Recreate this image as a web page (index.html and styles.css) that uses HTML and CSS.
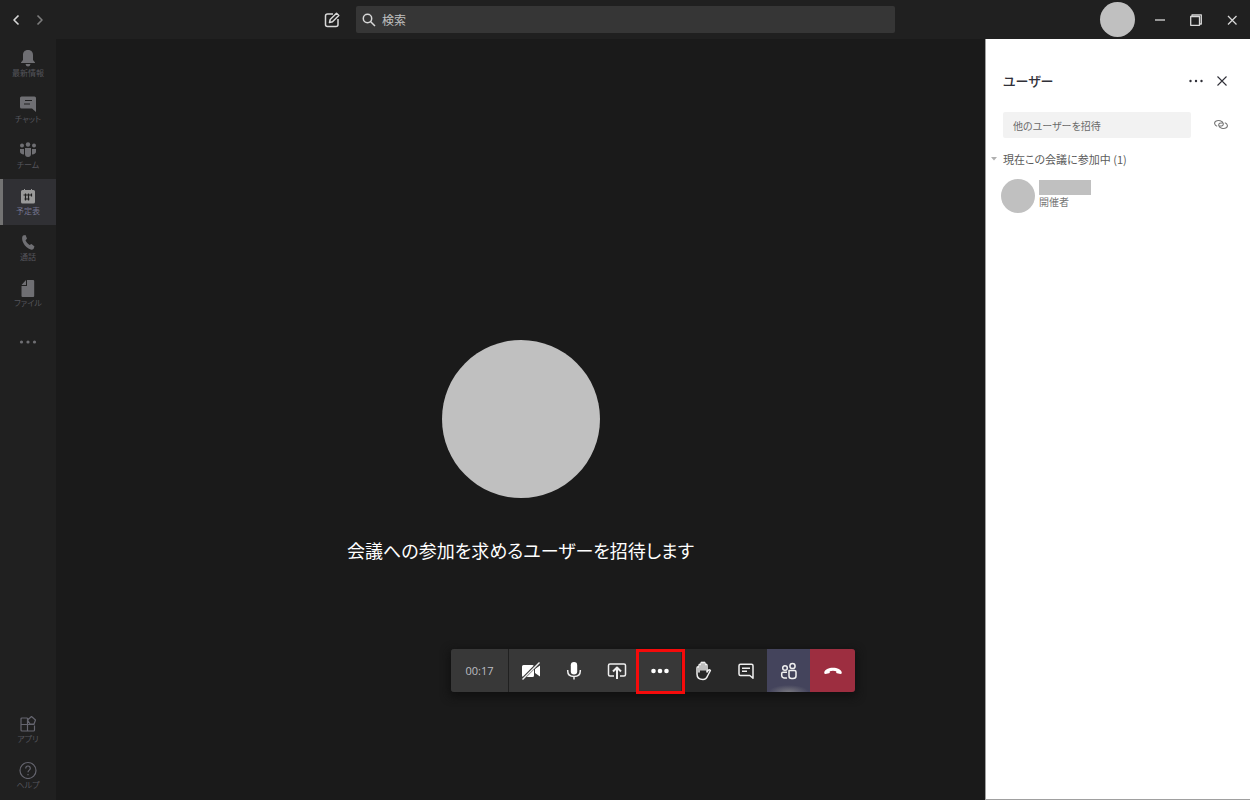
FILE: index.html
```html
<!DOCTYPE html>
<html lang="ja">
<head>
<meta charset="utf-8">
<meta name="viewport" content="width=device-width, initial-scale=1">
<title>会議</title>
<link rel="stylesheet" href="styles.css">
</head>
<body>
<div class="app">
  <header class="titlebar">
    <nav class="history">
      <button class="icon-button history-back" aria-label="戻る"><svg width="8" height="12" viewBox="0 0 8 12"><path d="M6.500 1.500 2 6l4.500 4.500"/></svg></button>
      <button class="icon-button history-next" aria-label="進む"><svg width="8" height="12" viewBox="0 0 8 12"><path d="M1.500 1.500 6 6l-4.500 4.500"/></svg></button>
    </nav>
    <div class="search-area">
      <button class="icon-button compose" aria-label="新しいチャット"><svg width="16" height="16" viewBox="0 0 16 16"><path d="M9 2H3.500Q1.500 2 1.500 4v8.500q0 2 2 2H12q2 0 2-2V7"/><path d="m5.500 10.500.7-3L12.500 1.200l2.300 2.300L8.500 9.800z"/></svg></button>
      <label class="search">
        <svg width="14" height="14" viewBox="0 0 14 14"><circle cx="5.500" cy="5.500" r="4.200"/><path d="m8.500 8.500 4.500 4.500"/></svg>
        <input type="search" placeholder="検索" aria-label="検索">
      </label>
    </div>
    <div class="window-controls">
      <button class="profile" aria-label="プロフィール"></button>
      <button class="icon-button" aria-label="最小化"><svg width="12" height="12" viewBox="0 0 12 12"><path d="M1 6h10"/></svg></button>
      <button class="icon-button" aria-label="元に戻す"><svg width="12" height="12" viewBox="0 0 12 12"><path d="M.7 2.500h8.800v8.800H.7zM2 2.500V.8h9.300V10H9.500"/></svg></button>
      <button class="icon-button" aria-label="閉じる"><svg width="12" height="12" viewBox="0 0 12 12"><path d="m2 2 8.500 8.500m0-8.500L2 10.500"/></svg></button>
    </div>
  </header>

  <div class="workspace">
    <nav class="rail">
      <a class="rail-item" href="#"><svg width="18" height="18" viewBox="0 0 18 18"><path d="M9 1C5.500 1 4 3.300 4 6v5l-2 2.500V14h14v-.5L14 11V6c0-2.700-1.500-5-5-5zM6.500 15h5Q11 17.500 9 17.500T6.500 15z"/></svg><span>最新情報</span></a>
      <a class="rail-item" href="#"><svg width="18" height="18" viewBox="0 0 18 18"><path d="M2.500 1.500h13q1.500 0 1.500 1.500v14l-4-3.500H2.500Q1 13.500 1 12V3q0-1.500 1.500-1.500z"/><path class="cut" d="M6 5.500h7M5 9h6"/></svg><span>チャット</span></a>
      <a class="rail-item" href="#"><svg width="18" height="18" viewBox="0 0 18 18"><circle cx="3" cy="4.500" r="2"/><circle cx="9" cy="3.500" r="2.200"/><circle cx="15" cy="4.500" r="2"/><path d="M6 7h6v6q0 3-3 3t-3-3zM1 8h4v5.500Q1 13 1 10.500zM13 8h4v2.500q0 2.500-4 3z"/></svg><span>チーム</span></a>
      <a class="rail-item active" href="#"><svg width="18" height="18" viewBox="0 0 18 18"><path d="M3.500 3H5V2h1v1h6V2h1v1h1.500Q16 3 16 4.500v10.500q0 1.500-1.500 1.500h-11Q2 16.500 2 15V4.500Q2 3 3.500 3z"/><path class="cut" d="M4.500 8h8M5.500 12h5M6.500 6.500v7M9.500 6.500v7M12.500 6.500v3"/></svg><span>予定表</span></a>
      <a class="rail-item" href="#"><svg width="18" height="18" viewBox="0 0 18 18"><path d="M4 2.500 6.500 2 8 5.500 6.500 7.500q1.500 3 4 4.500l2-1 3 2.500-1 2.500q-2 1.500-5-.5Q5 12.500 3.500 8 2.500 4 4 2.500z"/></svg><span>通話</span></a>
      <a class="rail-item" href="#"><svg width="18" height="18" viewBox="0 0 18 18"><path d="M8 1h6q1.200 0 1.200 1v15q0 1-1 1H3.500q-1 0-1-1V7H8zM2.500 6 7 1v5z"/></svg><span>ファイル</span></a>
      <button class="rail-more" aria-label="その他"><svg width="18" height="6" viewBox="0 0 18 6"><circle cx="2.500" cy="3" r="1.600"/><circle cx="9" cy="3" r="1.600"/><circle cx="15.500" cy="3" r="1.600"/></svg></button>
      <div class="rail-bottom">
        <a class="rail-item outlined" href="#"><svg width="18" height="18" viewBox="0 0 18 18"><path d="M8.500 3H3Q2 3 2 4v11q0 1 1 1h11.500q1 0 1-1v-4.500M2 9.500h13.500M8.500 3v13M12.500 1.500l4 3.500-1.500 4h-4L8.500 5z"/></svg><span>アプリ</span></a>
        <a class="rail-item outlined" href="#"><svg width="18" height="18" viewBox="0 0 18 18"><circle cx="9" cy="9.500" r="8"/><path d="M6.700 7.500Q6.800 5 9 5t2.300 2.500C11.300 9.300 9 9 9 11.300M9 13v1.200"/></svg><span>ヘルプ</span></a>
      </div>
    </nav>

    <main class="stage">
      <div class="stage-avatar"></div>
      <h1>会議への参加を求めるユーザーを招待します</h1>
    </main>

    <aside class="people">
      <div class="people-header">
        <h2>ユーザー</h2>
        <button class="icon-button" aria-label="その他のオプション"><svg class="dots" width="16" height="4" viewBox="0 0 16 4"><circle cx="2.500" cy="2" r="1.200"/><circle cx="8" cy="2" r="1.200"/><circle cx="13.500" cy="2" r="1.200"/></svg></button>
        <button class="icon-button" aria-label="閉じる"><svg width="12" height="12" viewBox="0 0 12 12"><path d="m1.500 1.500 9 9m0-9-9 9"/></svg></button>
      </div>
      <div class="invite">
        <input type="text" placeholder="他のユーザーを招待" aria-label="他のユーザーを招待">
        <button class="icon-button" aria-label="リンクをコピー"><svg width="14" height="12" viewBox="0 0 14 12"><path d="M3.200 7.200C.5 6.500-.3 3.500 1.800 2.200c2.500-1.500 7-.3 7.500 2.300.3 2-1.800 3-3.800 2.300M10.800 3.800c2.700.7 3.500 3.700 1.400 5-2.500 1.500-7 .3-7.500-2.300-.3-2 1.800-3 3.800-2.300"/></svg></button>
      </div>
      <button class="group-toggle"><svg width="6" height="4" viewBox="0 0 6 4"><path d="M0 0h6L3 3.500z"/></svg><span>現在この会議に参加中 (1)</span></button>
      <div class="person">
        <div class="person-avatar"></div>
        <div class="person-text"><div class="person-name"></div><span>開催者</span></div>
      </div>
    </aside>

    <div class="call-bar" role="toolbar" aria-label="通話コントロール">
      <time>00:17</time>
      <button class="solid" aria-label="カメラをオンにする"><svg width="22" height="20" viewBox="0 0 22 20"><path class="fill" d="M3.500 4h9Q14 4 14 5.500v9q0 1.500-1.500 1.500h-9Q2 16 2 14.500v-9Q2 4 3.500 4zM15 8l5-3.500v11L15 12z"/><path class="slash-gap" d="m1 19.500 18-18"/><path d="M2.500 18.500 19.500 1.500"/></svg></button>
      <button class="solid" aria-label="ミュート"><svg width="20" height="20" viewBox="0 0 20 20"><rect class="fill" x="6.800" y="1" width="6.400" height="12.500" rx="3.200"/><path d="M3.700 9v1q0 5.500 6.300 5.500t6.300-5.500V9M10 15.500v3"/></svg></button>
      <button class="solid" aria-label="共有"><svg width="20" height="18" viewBox="0 0 20 18"><path d="M7 14H3q-1.500 0-1.500-1.500v-9Q1.500 2 3 2h14q1.500 0 1.500 1.500v9q0 1.500-1.500 1.500h-4"/><path class="thick" d="M10 17V6M6 9.500l4-4 4 4"/></svg></button>
      <button class="solid highlighted" aria-label="その他の操作"><svg width="20" height="6" viewBox="0 0 20 6"><g class="fill"><circle cx="3.500" cy="3" r="2.300"/><circle cx="10" cy="3" r="2.300"/><circle cx="16.500" cy="3" r="2.300"/></g></svg></button>
      <button aria-label="手を挙げる"><svg width="18" height="20" viewBox="0 0 18 20"><path d="M5 11V4.500q0-1.200 1-1.200t1 1.200V9 2.500q0-1.200 1-1.200t1 1.200V9 2.500q0-1.200 1-1.200t1 1.200V9 4.500q0-1.200 1-1.200t1 1.200v6.500l1.200-1.700q1.200-.9 2.200.2L13.500 15q-1.300 3.500-4.500 3.500c-4 0-6-2.500-6-5.500V7q0-1.200 1-1.200T5 7z"/></svg></button>
      <button aria-label="会話の表示"><svg width="18" height="18" viewBox="0 0 18 18"><path d="M3.500 2.200h11q1.500 0 1.500 1.500v12.500l-3.200-2.700H3.500Q2 13.500 2 12V3.700q0-1.500 1.500-1.500zM5 6.200h8M5 9.300h5"/></svg></button>
      <button class="selected" aria-label="参加者の表示"><svg width="18" height="18" viewBox="0 0 18 18"><circle cx="5" cy="6" r="2.300"/><circle cx="12.500" cy="4" r="2.600"/><path d="M7 10.200H3q-1.300 0-1.300 1.300v2q0 3 5.300 2.500M9 8.500h5.500q1.500 0 1.500 1.500v4q0 2.500-3 2.500h-1.500q-2.500 0-2.500-2.500z"/></svg></button>
      <button class="hang-up" aria-label="退出"><svg width="20" height="10" viewBox="0 0 20 10"><path class="fill" d="M1.200 6.500C2 0 18 0 18.800 6.500q0 1.500-1.300 1.500L14 7.300q-.8-.2-.8-1V5.200q-3.200-1-6.400 0v1.100q0 .8-.8 1L2.500 8Q1.200 8 1.200 6.500z"/></svg></button>
    </div>
  </div>
</div>
</body>
</html>
```
FILE: styles.css
```css
* { box-sizing: border-box; }

body {
  margin: 0;
  background: #1a1a1a;
  color: #fff;
  font-family: "Noto Sans CJK JP", "Open Sans", sans-serif;
  font-feature-settings: "palt";
}

button, input { font: inherit; font-feature-settings: inherit; color: inherit; }
button { padding: 0; border: 0; background: none; cursor: pointer; }
svg { display: block; flex: none; fill: none; stroke: currentColor; stroke-width: 1.3; stroke-linejoin: round; }
h1, h2 { margin: 0; font-weight: 400; }

.app { min-height: 100vh; display: flex; flex-direction: column; }

.titlebar {
  display: grid;
  grid-template-columns: 324fr 571fr 355fr;
  align-items: center;
  height: 39px;
  background: #202020;
  color: #d8d8d8;
}

.icon-button { display: flex; align-items: center; justify-content: center; }
.history { display: flex; gap: 16px; padding-left: 12px; }
.history svg { stroke-width: 1.6; }
.history-next { color: #7c7c7c; }
.search-area { display: flex; align-items: center; gap: 16px; }
.compose svg { stroke-width: 1.5; }

.search {
  flex: 1;
  display: flex;
  align-items: center;
  gap: 6px;
  height: 27px;
  padding: 0 6px;
  border-radius: 2px;
  background: #363636;
}

.search svg { stroke-width: 1.5; }
.search input { flex: 1; min-width: 0; padding: 0; border: 0; outline: 0; background: none; font-size: 12px; }
.search input::placeholder { color: #c0c0c0; }

.window-controls { display: flex; align-items: center; justify-content: flex-end; gap: 24px; padding-right: 12px; }
.profile { width: 35px; height: 35px; margin-right: -5px; border-radius: 50%; background: #c0c0c0; }

.workspace { position: relative; flex: 1; display: flex; }

.rail {
  display: flex;
  flex-direction: column;
  width: 56px;
  padding: 2px 0 1px;
  background: #202020;
  color: #6f6f73;
}

.rail-item {
  display: flex;
  flex-direction: column;
  align-items: center;
  height: 46px;
  padding-top: 8px;
  color: inherit;
  font-size: 8px;
  line-height: 12px;
  text-decoration: none;
}

.rail-item span { color: #55555c; }
.rail-item svg { fill: currentColor; stroke: none; }
.rail-item .cut { fill: none; stroke: #202020; stroke-width: 1.2; }
.rail-item.active { border-left: 3px solid #737373; padding-right: 3px; background: #303034; color: #9a9a9a; }
.rail-item.active span { color: #74748f; }
.rail-item.outlined { color: #65656f; }
.rail-item.outlined svg { fill: none; stroke: currentColor; stroke-width: 1.2; }
.rail-more { display: flex; align-items: center; justify-content: center; height: 50px; }
.rail-more svg { fill: currentColor; stroke: none; }
.rail-bottom { margin-top: auto; }

.stage {
  flex: 1;
  display: flex;
  flex-direction: column;
  align-items: center;
  justify-content: center;
  gap: 38px;
  padding-top: 64px;
}

.stage-avatar { width: 158px; height: 158px; border-radius: 50%; background: #c0c0c0; }
.stage h1 { font-size: 18px; line-height: 28px; }

.people {
  width: 265px;
  padding: 30px 22px 0 8px;
  border-left: 1px solid #a0a0a0;
  border-bottom: 1px solid #a0a0a0;
  background: #fff;
  color: #777;
}

.people-header { display: flex; align-items: center; gap: 12px; padding-left: 9px; color: #303038; }
.people-header h2 { flex: 1; font-size: 13px; line-height: 24px; font-weight: 500; }
.people-header svg { stroke-width: 1.1; }
.people-header .dots { fill: currentColor; stroke: none; }

.invite { display: flex; align-items: center; gap: 23px; margin: 19px 0 11px; padding-left: 9px; }
.invite input {
  flex: 1;
  min-width: 0;
  height: 26px;
  padding: 0 10px;
  border: 0;
  border-radius: 2px;
  background: #f2f2f2;
  font-size: 10px;
}
.invite input::placeholder { color: #6a6a6a; }
.invite svg { stroke-width: 1.1; }

.group-toggle { display: flex; align-items: center; gap: 6px; margin-left: -3px; font-size: 11px; line-height: 20px; color: #5c5c5c; }
.group-toggle svg { fill: #b0b0b0; stroke: none; }

.person { display: flex; gap: 4px; margin-top: 10px; padding-left: 7px; }
.person-avatar { width: 34px; height: 34px; border-radius: 50%; background: #c0c0c0; }
.person-text { display: flex; flex-direction: column; padding-top: 1px; font-size: 10px; line-height: 14px; }
.person-name { width: 52px; height: 15px; background: #c0c0c0; }

.call-bar {
  position: absolute;
  bottom: 108px;
  left: 56px;
  right: 0;
  width: max-content;
  margin: 0 auto;
  display: flex;
  height: 43px;
  border-radius: 3px;
  background: #282828;
  box-shadow: 0 3px 8px 2px #111;
}

.call-bar time {
  display: flex;
  align-items: center;
  justify-content: center;
  width: 58px;
  border-right: 1px solid #202020;
  border-radius: 3px 0 0 3px;
  background: #383838;
  color: #bdbdc2;
  font: 11px "Open Sans", sans-serif;
}

.call-bar button { display: flex; align-items: center; justify-content: center; width: 43px; color: #efefef; }
.call-bar svg { stroke-width: 1.5; }
.call-bar .fill { fill: #fff; stroke: none; }
.call-bar .thick { stroke-width: 2; }
.call-bar .slash-gap { stroke: #383838; stroke-width: 3; }
.call-bar .solid { background: #383838; }
.call-bar .highlighted { position: relative; z-index: 1; }
.call-bar .highlighted::after { content: ""; position: absolute; inset: 0 -4px -2px -2px; border: 3px solid #f50b0b; }
.call-bar .selected { background: radial-gradient(ellipse 20px 7px at 50% 100%, #77777f, #44445c); }
.call-bar .hang-up { width: 45px; border-radius: 0 3px 3px 0; background: #9d2e40; }
```
